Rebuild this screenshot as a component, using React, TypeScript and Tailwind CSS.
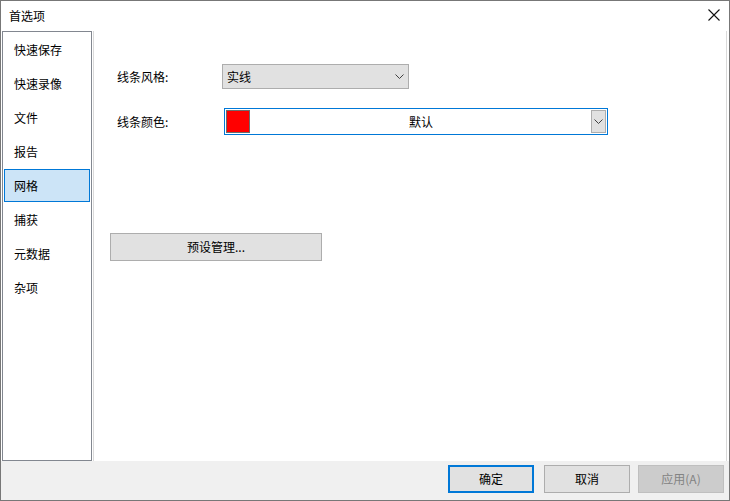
import React from "react";

const font = { fontFamily: '"Noto Sans CJK SC", "Noto Sans", sans-serif' };

function Chevron() {
  return (
    <svg width="9" height="5" viewBox="0 0 9 5" className="block">
      <path d="M0.5 0.5 L4.5 4.5 L8.5 0.5" fill="none" stroke="#404040" strokeWidth="1" />
    </svg>
  );
}

export default function App() {
  const items = ["快速保存", "快速录像", "文件", "报告", "网格", "捕获", "元数据", "杂项"];
  return (
    <div
      className="w-[730px] h-[501px] border border-[#777777] bg-white flex flex-col text-[12px] text-black overflow-hidden"
      style={font}
    >
      {/* title bar */}
      <div className="h-[30px] flex items-center justify-between pl-[8px] pr-[8px] shrink-0">
        <span className="leading-none">首选项</span>
        <svg width="12" height="12" viewBox="0 0 12 12" className="mt-[-2px] mr-[1px]">
          <path d="M0.5 0.5 L11.5 11.5 M11.5 0.5 L0.5 11.5" stroke="#111" strokeWidth="1.1" />
        </svg>
      </div>
      {/* body */}
      <div className="flex h-[430px] shrink-0">
        <div className="ml-[1px] w-[90px] h-[430px] border border-[#828790] pt-[1px] px-[1px]">
          {items.map((it) => (
            <div
              key={it}
              className={
                it === "网格"
                  ? "h-[33px] mb-[1px] flex items-center pl-[9px] bg-[#cce4f7] border border-[#0078d7]"
                  : "h-[33px] mb-[1px] flex items-center pl-[10px]"
              }
            >
              {it}
            </div>
          ))}
        </div>
        <div className="ml-[1px] w-[634px] h-[431px] border-l border-r border-b border-[#dadada] pt-[33px]">
          <div className="flex items-center h-[25px]">
            <span className="ml-[23px] w-[105px]">线条风格:</span>
            <div className="w-[187px] h-[25px] bg-[#e1e1e1] border border-[#adadad] flex items-center justify-between pl-[4px] pr-[4px]">
              <span>实线</span>
              <Chevron />
            </div>
          </div>
          <div className="flex items-center h-[27px] mt-[19px]">
            <span className="ml-[23px] w-[107px]">线条颜色:</span>
            <div className="w-[384px] h-[27px] border border-[#0078d7] bg-white flex items-center p-[1px]">
              <div className="w-[24px] h-[23px] bg-[#ff0000] border border-[#6b6b6b]" />
              <div className="flex-1 text-center pl-[1px]">默认</div>
              <div className="w-[15px] h-[23px] bg-[#e1e1e1] border border-[#adadad] flex items-center justify-center">
                <Chevron />
              </div>
            </div>
          </div>
          <div className="ml-[16px] mt-[98px] w-[212px] h-[28px] bg-[#e1e1e1] border border-[#adadad] flex items-center justify-center">
            预设管理...
          </div>
        </div>
      </div>
      {/* footer */}
      <div className="flex-1 bg-[#f0f0f0] flex items-start pt-[4px]">
        <div className="ml-[447px] w-[86px] h-[28px] border-2 border-[#0078d7] bg-[#e1e1e1] flex items-center justify-center">
          确定
        </div>
        <div className="ml-[10px] w-[86px] h-[28px] border border-[#adadad] bg-[#e1e1e1] flex items-center justify-center">
          取消
        </div>
        <div className="ml-[8px] w-[86px] h-[28px] border border-[#bfbfbf] bg-[#cccccc] text-[#838383] flex items-center justify-center">
          应用(A)
        </div>
      </div>
    </div>
  );
}
